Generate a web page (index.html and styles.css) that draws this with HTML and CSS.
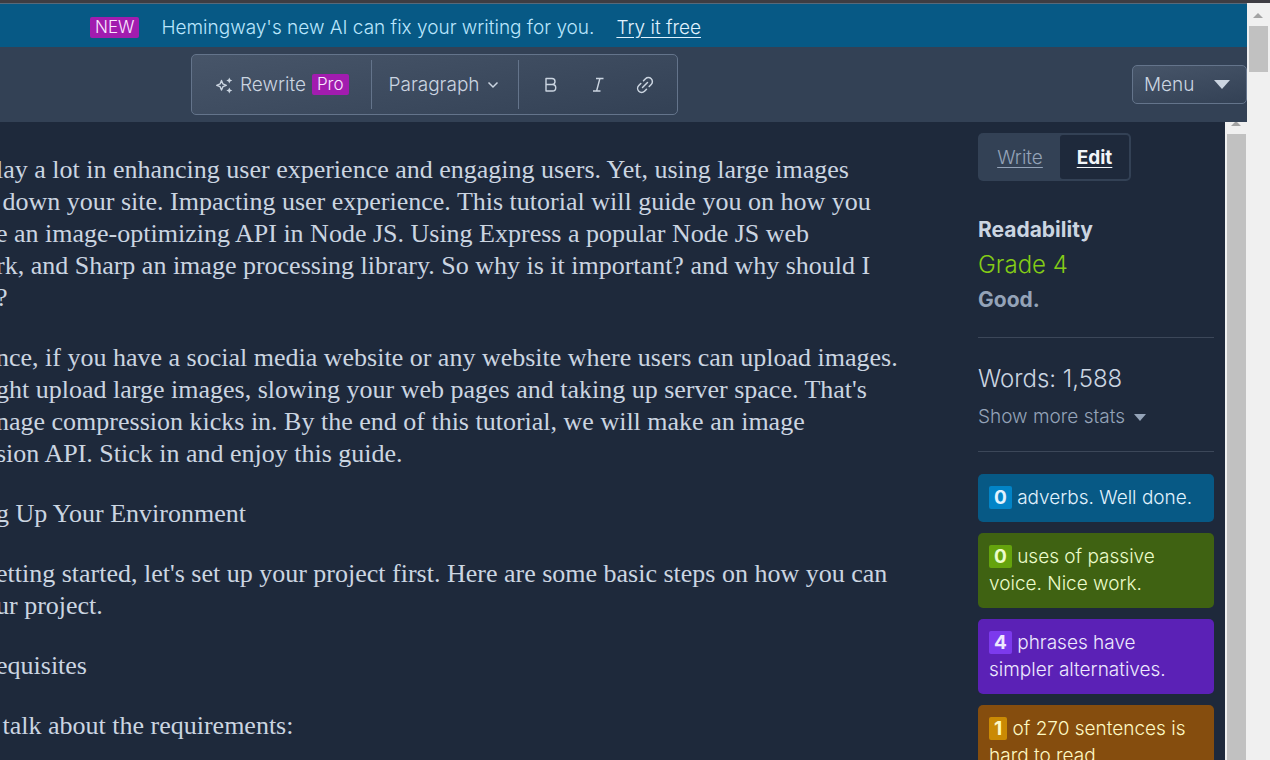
FILE: index.html
```html
<!DOCTYPE html>
<html lang="en">
<head>
<meta charset="utf-8">
<title>Hemingway Editor</title>
<link rel="stylesheet" href="styles.css">
</head>
<body>
<div class="window">
  <div class="app">
    <div class="banner">
      <span class="tag">NEW</span>
      <span class="banner-text">Hemingway's new AI can fix your writing for you.</span>
      <a class="banner-link" href="#">Try it free</a>
    </div>
    <header class="header">
      <div class="tools">
        <div class="tool-group rewrite-group">
          <button class="tool rewrite" type="button">
            <svg width="20" height="20" viewBox="0 0 20 20" fill="none" stroke="currentColor" stroke-width="1.4" stroke-linejoin="round"><path d="M7.500 5.500 8.900 8.900 12.300 10.300 8.900 11.700 7.500 15.100 6.100 11.700 2.700 10.300 6.100 8.900Z"/><path fill="currentColor" stroke="none" d="M15.300 2.500l.9 2.100 2.100.9-2.100.9-.9 2.100-.9-2.100-2.100-.9 2.100-.9ZM15.300 12.500l.9 2.100 2.100.9-2.100.9-.9 2.100-.9-2.100-2.100-.9 2.100-.9Z"/></svg>
            Rewrite <span class="tag">Pro</span>
          </button>
        </div>
        <div class="tool-group style-group">
          <select class="style-select" aria-label="Text style"><option>Paragraph</option></select>
          <svg class="chevron" width="12" height="12" viewBox="0 0 12 12" fill="none" stroke="currentColor" stroke-width="1.500"><path d="M1.500 3.500 6 8l4.500-4.500"/></svg>
        </div>
        <div class="tool-group format-group">
          <button class="tool" type="button" aria-label="Bold"><svg width="20" height="20" viewBox="0 0 20 20" fill="none" stroke="currentColor" stroke-width="1.400" stroke-linejoin="round"><path d="M5 3.500h6a2.900 2.900 0 0 1 0 6H5ZM5 9.500h6.500a3.200 3.200 0 0 1 0 6.500H5Z"/></svg></button>
          <button class="tool" type="button" aria-label="Italic"><svg width="20" height="20" viewBox="0 0 20 20" fill="none" stroke="currentColor" stroke-width="1.400"><path d="M8 3.500h7.500M5 16h7.500M11.900 3.500 8.600 16"/></svg></button>
          <button class="tool" type="button" aria-label="Link"><svg width="20" height="20" viewBox="0 0 20 20" fill="none" stroke="currentColor" stroke-width="1.500" stroke-linecap="round"><path d="M7.500 12.500l5-5M8.500 5.800l2-2a3.700 3.700 0 0 1 5.700 5.700l-2 2M11.500 14.200l-2 2a3.700 3.700 0 0 1-5.700-5.700l2-2"/></svg></button>
        </div>
      </div>
      <button class="menu" type="button">Menu <span class="triangle"></span></button>
    </header>
    <div class="workspace">
      <main class="editor">
        <p>lay a lot in enhancing user experience and engaging users. Yet, using large images<br>&nbsp;down your site. Impacting user experience. This tutorial will guide you on how you<br>e an image-optimizing API in Node JS. Using Express a popular Node JS web<br>rk, and Sharp an image processing library. So why is it important? and why should I<br>?</p>
        <p>nce, if you have a social media website or any website where users can upload images.<br>ght upload large images, slowing your web pages and taking up server space. That's<br>nage compression kicks in. By the end of this tutorial, we will make an image<br>sion API. Stick in and enjoy this guide.</p>
        <p>g Up Your Environment</p>
        <p>etting started, let's set up your project first. Here are some basic steps on how you can<br>ur project.</p>
        <p>equisites</p>
        <p>&nbsp;talk about the requirements:</p>
      </main>
      <aside class="sidebar">
        <nav class="modes">
          <a class="mode" href="#">Write</a>
          <a class="mode mode-active" href="#">Edit</a>
        </nav>
        <section class="readability">
          <h2 class="label">Readability</h2>
          <p class="grade">Grade 4</p>
          <p class="verdict">Good.</p>
        </section>
        <section class="stats">
          <p class="words">Words: 1,588</p>
          <button class="more" type="button">Show more stats <span class="triangle triangle-small"></span></button>
        </section>
        <section class="cards">
          <p class="card blue"><b class="count">0</b> adverbs. Well done.</p>
          <p class="card green"><b class="count">0</b> uses of passive voice. Nice work.</p>
          <p class="card purple"><b class="count">4</b> phrases have simpler alternatives.</p>
          <p class="card amber"><b class="count">1</b> of 270 sentences is hard to read.</p>
        </section>
      </aside>
      <div class="scrollbar inner-scroll"><span class="arrow"></span><span class="thumb"></span></div>
    </div>
  </div>
  <div class="scrollbar page-scroll"><span class="arrow"></span><span class="thumb"></span></div>
</div>
</body>
</html>
```
FILE: styles.css
```css
* { box-sizing: border-box; }
body {
  margin: 0;
  background: #1e293b;
  color: #cbd5e1;
  font: 300 19px/27px Inter, sans-serif;
}
p, h2 { margin: 0; }
button, select { font: inherit; color: inherit; background: none; border: 0; padding: 0; margin: 0; }
.window {
  display: flex;
  height: 100vh;
  overflow: hidden;
  border-top: 3px solid #3e3d43;
}
.app { flex: 1; min-width: 0; display: flex; flex-direction: column; }

.banner {
  display: flex;
  align-items: center;
  gap: 22px;
  height: 44px;
  flex: none;
  padding: 3px 90px 0;
  border-top: 1px solid #57697a;
  background: #075985;
  color: #bae6fd;
}
.banner-link { color: #e0f2fe; text-underline-offset: 3px; }
.tag {
  padding: 0 5px;
  border-radius: 2px;
  background: #a21caf;
  color: #fae8ff;
  font-size: 17px;
  line-height: 21px;
}

.header {
  display: flex;
  align-items: center;
  justify-content: space-between;
  height: 75px;
  flex: none;
  padding-left: 191px;
  background: #334155;
}
.tools {
  display: flex;
  padding: 5px 0;
  border: 1px solid #64748b;
  border-radius: 5px;
  background: linear-gradient(170deg, #475569, #334155);
}
.tool-group { display: flex; align-items: center; height: 49px; }
.tool-group + .tool-group { border-left: 1px solid #64748b; }
.rewrite-group { padding: 0 22px; }
.style-group { padding: 0 19px 0 17px; }
.format-group { padding: 0 22px; gap: 27px; }
.tool { display: flex; align-items: center; gap: 6px; }
.tool svg { display: block; }
.style-select { appearance: none; }
.chevron { margin-left: 7px; }
.menu {
  display: flex;
  align-items: center;
  justify-content: space-between;
  width: 115px;
  height: 39px;
  padding: 0 16px 0 11px;
  border: 1px solid #64748b;
  border-radius: 5px;
  background: linear-gradient(170deg, #475569, #334155);
}
.triangle {
  border: 8px solid transparent;
  border-top: 9px solid #cbd5e1;
  border-bottom: 0;
}

.workspace { flex: 1; min-height: 0; display: flex; overflow: hidden; }
.editor {
  flex: 1;
  min-width: 0;
  margin-left: -4px;
  padding-top: 32px;
  font: 400 26px/32px "Liberation Serif", serif;
  white-space: nowrap;
}
.editor p { margin-bottom: 28px; }

.sidebar { width: 247px; flex: none; padding: 11px 11px 0 0; }
.modes {
  display: flex;
  width: 153px;
  height: 48px;
  padding: 2px;
  border-radius: 5px;
  background: #334155;
}
.mode {
  flex: 1;
  border-radius: 3px;
  color: #94a3b8;
  line-height: 46px;
  text-align: center;
  text-underline-offset: 3px;
}
.mode:first-child { flex: 0 0 80px; }
.mode-active { background: #1e293b; color: #f1f5f9; font-weight: 700; }
.readability { padding: 31px 0 20px; border-bottom: 1px solid #3c4759; line-height: 35px; }
.label { font-size: 21px; font-weight: 700; line-height: 35px; }
.grade { color: #84cc16; font-size: 24px; }
.verdict { color: #94a3b8; font-size: 21px; font-weight: 700; }
.stats { padding: 22px 0 15px; border-bottom: 1px solid #3c4759; }
.words { font-size: 24px; line-height: 38px; }
.more { display: flex; align-items: center; gap: 9px; color: #94a3b8; line-height: 38px; }
.triangle-small { border-width: 7px 6px 0; border-top-color: #94a3b8; }
.cards { display: grid; gap: 11px; padding-top: 22px; }
.card { padding: 10px 11px 11px; border-radius: 5px; }
.count { display: inline-block; padding: 0 5px; border-radius: 2px; line-height: 23px; font-weight: 700; }
.blue { background: #075985; color: #e0f2fe; }
.blue .count { background: #0284c7; }
.green { background: #3f6212; color: #ecfccb; }
.green .count { background: #65a30d; }
.purple { background: #5b21b6; color: #ede9fe; }
.purple .count { background: #7c3aed; }
.amber { background: #854d0e; color: #fef9c3; }
.amber .count { background: #ca8a04; }

.scrollbar {
  display: flex;
  flex-direction: column;
  align-items: center;
  flex: none;
  width: 22px;
  background: #f0f0f0;
}
.arrow { border: 5px solid transparent; border-top: 0; border-bottom-color: #a3a3a3; }
.thumb { width: 19px; background: #c1c1c1; }
.page-scroll { width: 23px; padding-right: 1px; }
.page-scroll .arrow { margin: 10px 0 8px; }
.page-scroll .thumb { height: 46px; }
.inner-scroll .arrow { margin: -1px 0 8px; }
.inner-scroll .thumb { flex: 1; }
```
